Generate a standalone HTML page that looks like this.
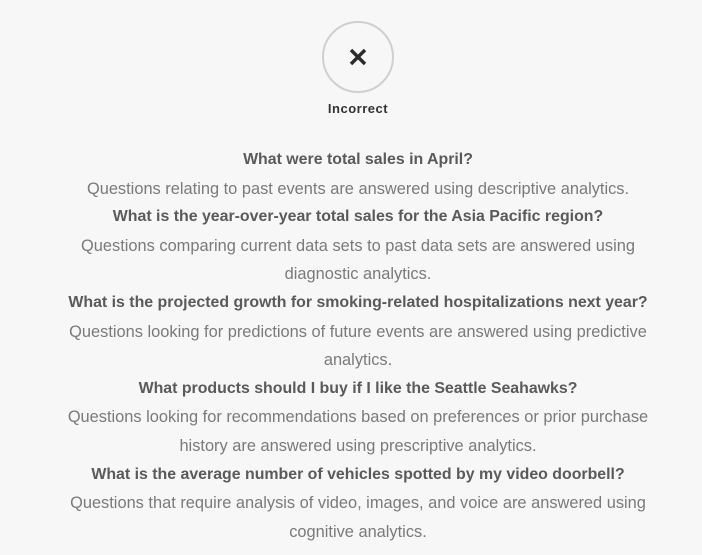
<!DOCTYPE html>
<html><head><style>
html,body{margin:0;padding:0;background:#f7f7f7;width:702px;height:555px;overflow:hidden}
body{font-family:"Liberation Sans",sans-serif;text-align:center}
.c{position:absolute;left:322px;top:21px;width:68px;height:68px;border:2px solid #cfcfcf;border-radius:50%;box-sizing:content-box}
.c svg{position:absolute;left:25px;top:25px}
.lbl{position:absolute;top:101px;left:7px;width:702px;font-size:13px;font-weight:bold;color:#333;letter-spacing:0.5px}
.t{position:absolute;top:146px;left:53px;width:610px;font-size:16.4px;line-height:28.6px;color:#7a7a7a}
.t b{display:block;color:#5a5a5a;font-weight:bold;font-size:15.9px}
.t span{display:block}
</style></head><body>
<div class="c"><svg width="18" height="18" viewBox="0 0 18 18"><path d="M2 2L16 16M16 2L2 16" stroke="#2b2b2b" stroke-width="3.4" stroke-linecap="butt"/></svg></div>
<div class="lbl">Incorrect</div>
<div class="t">
<b>What were total sales in April?</b>
<span>Questions relating to past events are answered using descriptive analytics.</span>
<b>What is the year-over-year total sales for the Asia Pacific region?</b>
<span>Questions comparing current data sets to past data sets are answered using<br>diagnostic analytics.</span>
<b>What is the projected growth for smoking-related hospitalizations next year?</b>
<span>Questions looking for predictions of future events are answered using predictive<br>analytics.</span>
<b>What products should I buy if I like the Seattle Seahawks?</b>
<span>Questions looking for recommendations based on preferences or prior purchase<br>history are answered using prescriptive analytics.</span>
<b>What is the average number of vehicles spotted by my video doorbell?</b>
<span>Questions that require analysis of video, images, and voice are answered using<br>cognitive analytics.</span>
</div>
</body></html>
